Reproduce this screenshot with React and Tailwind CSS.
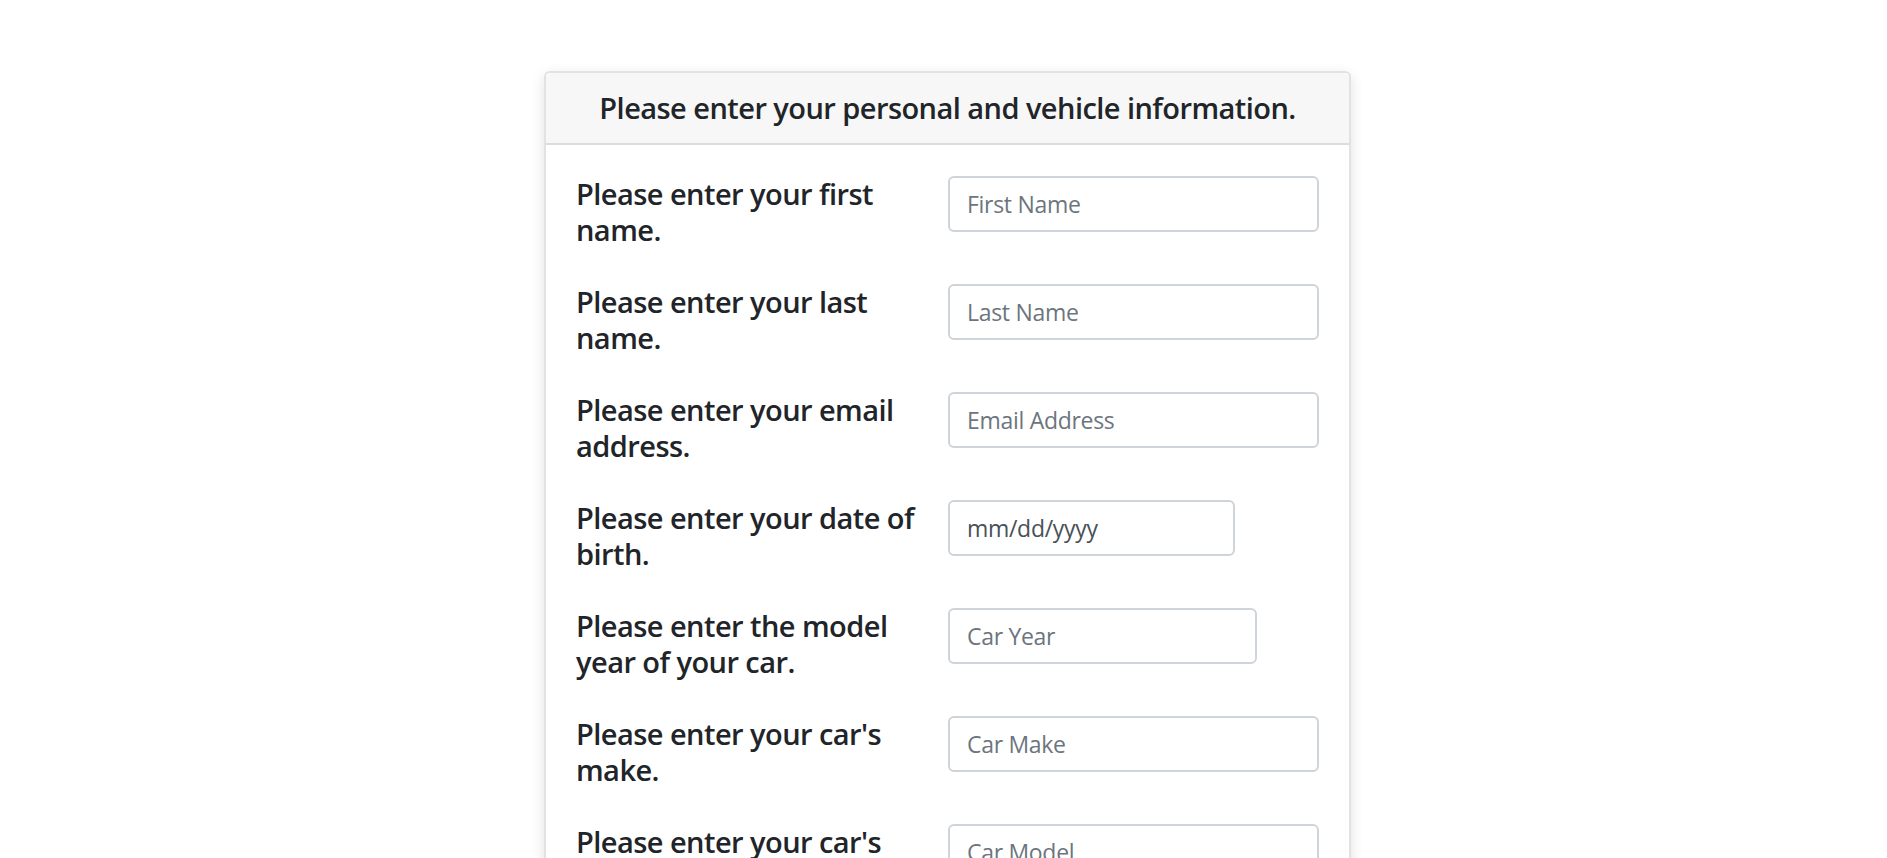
import React from "react";

const fields = [
  { label: "Please enter your first name.", placeholder: "First Name", type: "text", w: "w-[371px]" },
  { label: "Please enter your last name.", placeholder: "Last Name", type: "text", w: "w-[371px]" },
  { label: "Please enter your email address.", placeholder: "Email Address", type: "email", w: "w-[371px]" },
  { label: "Please enter your date of birth.", placeholder: "mm/dd/yyyy", type: "date", w: "w-[287px]" },
  { label: "Please enter the model year of your car.", placeholder: "Car Year", type: "number", w: "w-[309px]" },
  { label: "Please enter your car's make.", placeholder: "Car Make", type: "text", w: "w-[371px]" },
  { label: "Please enter your car's model.", placeholder: "Car Model", type: "text", w: "w-[371px]" },
  { label: "Please enter your car's mileage.", placeholder: "Mileage", type: "number", w: "w-[309px]" },
];

export default function App() {
  return (
    <div
      className="min-h-screen bg-white text-[#212529] flex justify-center pl-[8px] pt-[71px]"
      style={{ fontFamily: "'Open Sans', 'Noto Sans', sans-serif" }}
    >
      <div className="w-[807px] h-fit bg-white border-2 border-[#e2e2e2] rounded-[6px] shadow-[0_4px_14px_rgba(0,0,0,0.12)]">
        <div className="bg-[#f7f7f7] border-b-2 border-[#dcdcdc] px-[30px] py-[17px] text-center text-[29px] leading-[36px] tracking-[-0.55px] font-semibold rounded-t-[6px]">
          Please enter your personal and vehicle information.
        </div>
        <div className="px-[30px] pt-[31px] pb-[10px] flex flex-col">
          {fields.map((f) => (
            <div key={f.placeholder} className="flex items-start gap-[22px] mb-[24px]">
              <label className="w-[350px] shrink-0 text-[29px] leading-[36px] tracking-[-0.55px] font-semibold mb-[12px]">
                {f.label}
              </label>
              {f.type === "date" ? (
                <div className={`${f.w} h-[56px] border-2 border-[#ced4da] rounded-[6px] px-[17px] flex items-center text-[23px] tracking-[-0.3px] text-[#495057]`}>
                  mm/dd/yyyy
                </div>
              ) : (
                <input
                  type="text"
                  placeholder={f.placeholder}
                  className={`${f.w} h-[56px] border-2 border-[#ced4da] rounded-[6px] px-[17px] text-[23px] tracking-[-0.3px] text-[#495057] placeholder:text-[#6c757d] outline-none`}
                />
              )}
            </div>
          ))}
          <div className="h-[56px]" />
        </div>
      </div>
    </div>
  );
}
